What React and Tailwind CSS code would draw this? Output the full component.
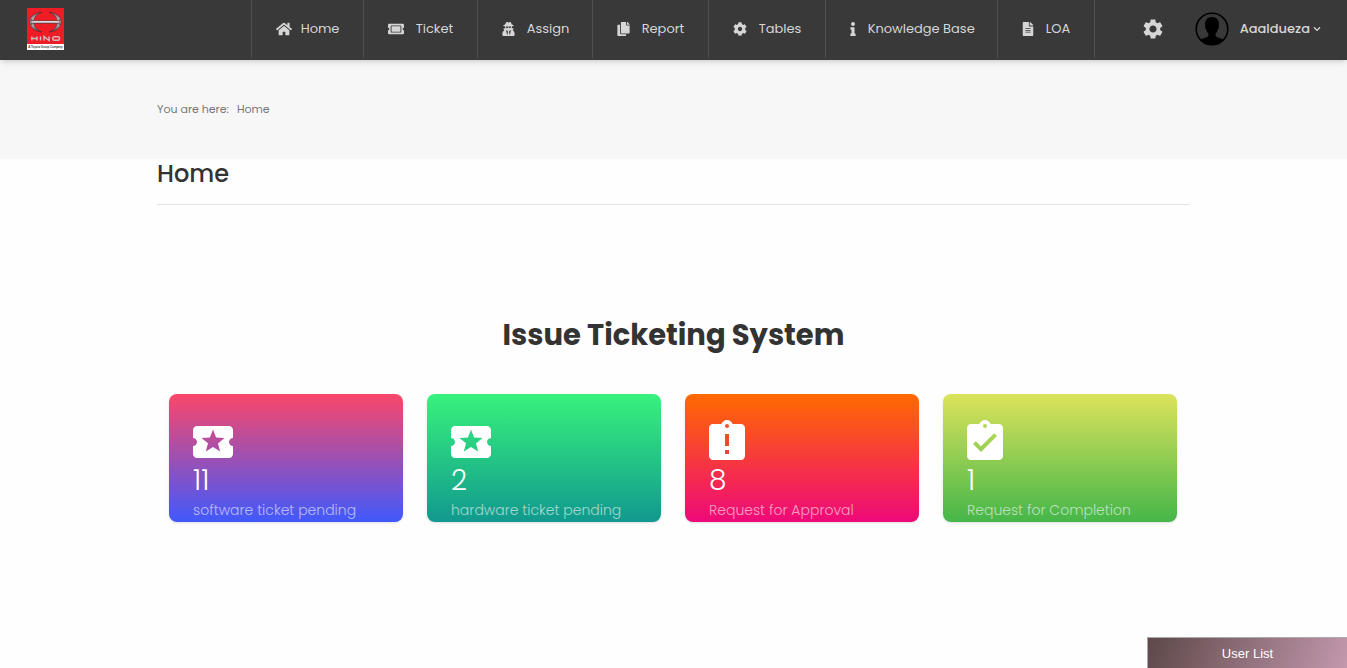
import {
  FaHome,
  FaTicketAlt,
  FaUserSecret,
  FaCopy,
  FaCog,
  FaInfo,
  FaFileAlt,
  FaChevronDown,
} from "react-icons/fa";
import { MdSettings } from "react-icons/md";

const navItems = [
  { label: "Home", icon: FaHome, width: "w-28", iconSize: "h-4 w-4", gap: "gap-[9px]" },
  { label: "Ticket", icon: FaTicketAlt, width: "w-[114px]", iconSize: "h-4 w-4", gap: "gap-3" },
  { label: "Assign", icon: FaUserSecret, width: "w-[115px]", iconSize: "h-[14px] w-[13px]", gap: "gap-3" },
  { label: "Report", icon: FaCopy, width: "w-[116px]", iconSize: "h-[14px] w-[13px]", gap: "gap-3" },
  { label: "Tables", icon: FaCog, width: "w-[117px]", iconSize: "h-[14px] w-[14px]", gap: "gap-3" },
  { label: "Knowledge Base", icon: FaInfo, width: "w-[172px]", iconSize: "h-[14px] w-[6px]", gap: "gap-3" },
  { label: "LOA", icon: FaFileAlt, width: "w-[98px]", iconSize: "h-[14px] w-3", gap: "gap-3" },
];

function PlayTicketIcon() {
  return (
    <svg viewBox="2 1 20 20" className="h-10 w-10" fill="currentColor" aria-hidden="true">
      <path d="M20 12c0-1.1.9-2 2-2V6c0-1.1-.9-2-2-2H4c-1.1 0-1.99.9-1.99 2v4c1.1 0 1.99.9 1.99 2s-.89 2-2 2v4c0 1.1.9 2 2 2h16c1.1 0 2-.9 2-2v-4c-1.1 0-2-.9-2-2zm-4.42 4.8L12 14.5l-3.58 2.3 1.08-4.12-3.29-2.69 4.24-.25L12 5.8l1.54 3.95 4.24.25-3.29 2.69 1.09 4.11z" />
    </svg>
  );
}

function AssignmentLateIcon() {
  return (
    <svg viewBox="3 1 18 20" className="h-10 w-9" fill="currentColor" aria-hidden="true">
      <path d="M19 3h-4.18C14.4 1.84 13.3 1 12 1c-1.3 0-2.4.84-2.82 2H5c-1.1 0-2 .9-2 2v14c0 1.1.9 2 2 2h14c1.1 0 2-.9 2-2V5c0-1.1-.9-2-2-2zm-6 15h-2v-2h2v2zm0-4h-2V8h2v6zm-1-9c-.55 0-1-.45-1-1s.45-1 1-1 1 .45 1 1-.45 1-1 1z" />
    </svg>
  );
}

function AssignmentDoneIcon() {
  return (
    <svg viewBox="3 1 18 20" className="h-10 w-9" fill="currentColor" aria-hidden="true">
      <path d="M19 3h-4.18C14.4 1.84 13.3 1 12 1c-1.3 0-2.4.84-2.82 2H5c-1.1 0-2 .9-2 2v14c0 1.1.9 2 2 2h14c1.1 0 2-.9 2-2V5c0-1.1-.9-2-2-2zm-7 0c.55 0 1 .45 1 1s-.45 1-1 1-1-.45-1-1 .45-1 1-1zm-2 14l-4-4 1.41-1.41L10 14.17l6.59-6.59L18 9l-8 8z" />
    </svg>
  );
}

const cards = [
  { count: "11", label: "software ticket pending", icon: PlayTicketIcon, colors: "from-[#fa4769] to-[#4059fb]" },
  { count: "2", label: "hardware ticket pending", icon: PlayTicketIcon, colors: "from-[#38f27c] to-[#11998e]" },
  { count: "8", label: "Request for Approval", icon: AssignmentLateIcon, colors: "from-[#ff6a00] to-[#ee0979]" },
  { count: "1", label: "Request for Completion", icon: AssignmentDoneIcon, colors: "from-[#dce35b] to-[#45b649]" },
];

function HinoLogo() {
  return (
    <svg viewBox="0 0 37 42" className="h-[42px] w-[37px]" role="img" aria-label="Hino">
      <defs>
        <linearGradient id="chrome" x1="0" y1="0" x2="0" y2="1">
          <stop offset="0" stopColor="#6b5a5d" />
          <stop offset="0.5" stopColor="#d9d5d6" />
          <stop offset="1" stopColor="#4b3f42" />
        </linearGradient>
      </defs>
      <rect width="37" height="37" fill="#ee1c25" />
      <rect y="36" width="37" height="6" fill="#fff" />
      <g fill="url(#chrome)" stroke="#40262b" strokeWidth="0.5">
        <path d="M15 4.200C7.500 4.800 3 8.500 3 14s4.500 9.400 12 10C9.500 22 6.800 18.500 6.800 14S9.500 6 15 4.200z" />
        <path d="M22 4.200C29.500 4.800 34 8.500 34 14s-4.500 9.400-12 10c5.500-2 8.200-5.500 8.200-10S27.500 6 22 4.200z" />
        <path d="M4 11.500c2 1 4 1.300 6 1.300h17c2 0 4-.3 6-1.300v5c-2-.9-4-1.200-6-1.200H10c-2 0-4 .3-6 1.200z" />
      </g>
      <path d="M7 13.700h23" stroke="#f2f0f0" strokeWidth="0.900" />
      <path
        d="M4.800 28.500v4M10 28.500v4M4.800 30.500H10M13.500 28.500v4M17 32.500v-4l5 4v-4M27 28.700h4.200q1.300 0 1.300 1.800T31.200 32.300H27q-1.300 0-1.300-1.800T27 28.700z"
        fill="none"
        stroke="#d2b9bc"
        strokeWidth="1.500"
      />
      <text x="18.500" y="39.900" textAnchor="middle" fontSize="2.800" fontWeight="700" fontFamily="Liberation Sans, sans-serif" fill="#3a3a3a">
        A Toyota Group Company
      </text>
    </svg>
  );
}

function Avatar() {
  return (
    <svg viewBox="0 0 34 34" className="h-[34px] w-[34px]" aria-hidden="true">
      <circle cx="17" cy="17" r="15.800" fill="none" stroke="#000" strokeWidth="1.600" />
      <path
        d="M17 5c-4.500 0-7 2.800-7 7 0 1 .1 1.500.3 2-.6.500-.2 2.800.8 3.200.5 2 1.200 3.200 2.300 4.200v2.300C12.500 25.500 7.500 26 5.500 28.200 8.500 31.300 12.500 33 17 33s8.500-1.700 11.500-4.800C26.500 26 21.500 25.500 20.600 23.700v-2.300c1.100-1 1.800-2.200 2.300-4.200 1-.4 1.400-2.700.8-3.200.2-.5.3-1 .3-2 0-4.200-2.500-7-7-7z"
        fill="#000"
      />
    </svg>
  );
}

function Header() {
  return (
    <header className="relative flex h-[60px] items-center justify-between bg-[#393939] pb-[2px] text-[13px] text-[#d6d6d6] shadow-md">
      <a href="#home" className="ml-[27px] block">
        <HinoLogo />
      </a>
      <div className="flex h-full items-center">
        <nav className="flex h-full">
          {navItems.map(({ label, icon: Icon, width, iconSize, gap }) => (
            <a
              key={label}
              href={"#" + label.toLowerCase().replace(" ", "-")}
              className={`flex h-full items-center border-l border-[#505050] pl-6 last:border-r ${width} ${gap}`}
            >
              <Icon className={`shrink-0 ${iconSize}`} />
              <span className="whitespace-nowrap">{label}</span>
            </a>
          ))}
        </nav>
        <button type="button" aria-label="Settings" className="ml-[46px]">
          <MdSettings className="h-6 w-6" />
        </button>
        <button type="button" className="mr-[26px] ml-[30px] flex items-center gap-[11px] font-medium">
          <Avatar />
          <span className="flex items-center gap-[3px]">
            Aaaldueza
            <FaChevronDown className="h-2 w-2" />
          </span>
        </button>
      </div>
    </header>
  );
}

export default function App() {
  return (
    <div className="min-h-screen bg-[#fefefe] font-['Poppins','Inter',sans-serif] text-[#333]">
      <Header />
      <div className="bg-[#f7f7f7]">
        <div className="mx-auto flex h-[99px] max-w-[1033px] items-center gap-2 text-[11px] text-[#777]">
          <span>You are here:</span>
          <a href="#home">Home</a>
        </div>
      </div>
      <main className="mx-auto max-w-[1033px]">
        <h1 className="border-b border-[#e5e5e5] pb-4 text-2xl leading-[29px] font-medium">Home</h1>
        <h2 className="mt-[108px] text-center text-[29px] leading-[44px] font-bold">Issue Ticketing System</h2>
        <div className="mx-3 mt-[37px] grid max-w-[1008px] grid-cols-4 gap-6">
          {cards.map(({ count, label, icon: Icon, colors }) => (
            <section
              key={label}
              className={`h-32 rounded-lg bg-linear-to-b/srgb px-6 pt-[26px] text-white shadow-sm ${colors}`}
            >
              <Icon />
              <p className="text-[28px] leading-[42px] font-light">{count}</p>
              <p className="text-sm leading-4 font-light whitespace-nowrap text-white/60">{label}</p>
            </section>
          ))}
        </div>
      </main>
      <button
        type="button"
        className="fixed right-0 bottom-0 h-[31px] w-[200px] border-t border-l border-[#aaa] bg-[linear-gradient(110deg,#5d4848,#c398ae)] pt-px font-['Liberation_Sans',Arial,sans-serif] text-[13px] text-white"
      >
        User List
      </button>
    </div>
  );
}
